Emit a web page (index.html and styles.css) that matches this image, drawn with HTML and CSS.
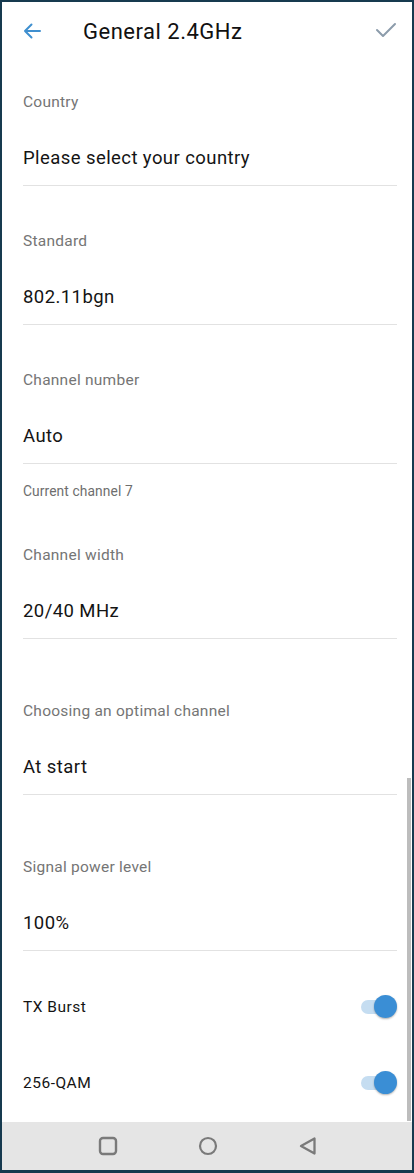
FILE: index.html
```html
<!DOCTYPE html>
<html>
<head>
<meta charset="utf-8">
<link rel="stylesheet" href="styles.css">
</head>
<body>
<div class="screen">
  <div class="header">
    <svg class="back" width="20" height="20" viewBox="0 0 20 20"><path d="M18 10H3M9.5 3.5L3 10l6.5 6.5" fill="none" stroke="#3f8fcf" stroke-width="2" stroke-linecap="round" stroke-linejoin="round"/></svg>
    <div class="title">General 2.4GHz</div>
    <svg class="check" width="22" height="16" viewBox="0 0 22 16"><path d="M2 8l6 6L20 2" fill="none" stroke="#8c9cab" stroke-width="2" stroke-linecap="round" stroke-linejoin="round"/></svg>
  </div>
  <div class="content">
    <div class="field first">
      <div class="label">Country</div>
      <div class="value">Please select your country</div>
      <div class="divider"></div>
    </div>
    <div class="field">
      <div class="label">Standard</div>
      <div class="value">802.11bgn</div>
      <div class="divider"></div>
    </div>
    <div class="field">
      <div class="label">Channel number</div>
      <div class="value">Auto</div>
      <div class="divider"></div>
      <div class="helper">Current channel 7</div>
    </div>
    <div class="field">
      <div class="label">Channel width</div>
      <div class="value">20/40 MHz</div>
      <div class="divider"></div>
    </div>
    <div class="field wide">
      <div class="label">Choosing an optimal channel</div>
      <div class="value">At start</div>
      <div class="divider"></div>
    </div>
    <div class="field wide">
      <div class="label">Signal power level</div>
      <div class="value">100%</div>
      <div class="divider"></div>
    </div>
    <div class="row first-row">
      <span class="row-label">TX Burst</span>
      <span class="toggle"><span class="track"></span><span class="knob"></span></span>
    </div>
    <div class="row">
      <span class="row-label">256-QAM</span>
      <span class="toggle"><span class="track"></span><span class="knob"></span></span>
    </div>
  </div>
  <div class="scrollbar"></div>
  <div class="navbar">
    <svg width="20" height="20" viewBox="0 0 20 20"><rect x="2" y="2" width="16" height="16" rx="3" fill="none" stroke="#7a7a7a" stroke-width="2.4"/></svg>
    <svg width="20" height="20" viewBox="0 0 20 20"><circle cx="10" cy="10" r="8" fill="none" stroke="#7a7a7a" stroke-width="2.2"/></svg>
    <svg width="20" height="20" viewBox="0 0 20 20"><path d="M16.5 2.5v15L3 10z" fill="none" stroke="#7a7a7a" stroke-width="2.3" stroke-linejoin="round"/></svg>
  </div>
</div>
</body>
</html>
```

FILE: styles.css
```css
html, body {
  margin: 0;
  padding: 0;
}
body {
  background: #163a4f;
  font-family: Roboto, "Noto Sans", Arial, sans-serif;
  height: 1173px;
  overflow: hidden;
}
.screen {
  margin: 2px 2px 3px 2px;
  height: 1168px;
  background: #ffffff;
  display: flex;
  flex-direction: column;
  position: relative;
}
.header {
  height: 58px;
  display: flex;
  align-items: center;
  padding: 0 15px 0 20px;
  flex-shrink: 0;
}
.back {
  flex-shrink: 0;
}
.title {
  margin-left: 41px;
  font-size: 22px;
  letter-spacing: 0.5px;
  color: #111111;
  flex: 1;
}
.check {
  margin-top: -2px;
}
.content {
  flex: 1;
  padding: 0 15px 0 21px;
}
.field {
  padding-top: 45px;
}
.field.first {
  padding-top: 32px;
}
.field.wide {
  padding-top: 62px;
}
.label {
  font-size: 15.5px;
  letter-spacing: 0.25px;
  line-height: 20px;
  height: 20px;
  color: #757575;
}
.value {
  margin-top: 34px;
  font-size: 18.5px;
  letter-spacing: 0.42px;
  line-height: 24px;
  height: 24px;
  color: #141414;
}
.divider {
  margin-top: 15px;
  height: 1px;
  background: #e2e2e2;
}
.helper {
  margin-top: 18px;
  font-size: 13.8px;
  letter-spacing: 0.1px;
  line-height: 18px;
  height: 18px;
  color: #6e6e6e;
}
.row {
  height: 48px;
  display: flex;
  align-items: center;
  justify-content: space-between;
  margin-top: 28px;
}
.row.first-row {
  margin-top: 32px;
}
.row-label {
  font-size: 15.5px;
  letter-spacing: 0.5px;
  color: #141414;
}
.toggle {
  position: relative;
  width: 38px;
  height: 24px;
  display: block;
}
.track {
  position: absolute;
  left: 2px;
  top: 5px;
  width: 30px;
  height: 14px;
  border-radius: 7px;
  background: #c5ddf1;
}
.knob {
  position: absolute;
  right: 0;
  top: 0;
  width: 23px;
  height: 23px;
  border-radius: 50%;
  background: #3a8ed5;
  box-shadow: 0 1px 2px rgba(0, 0, 0, 0.3);
}
.scrollbar {
  position: absolute;
  right: 1px;
  top: 776px;
  width: 4px;
  height: 343px;
  background: #bdbdbd;
}
.navbar {
  height: 48px;
  background: #e5e5e5;
  display: flex;
  align-items: center;
  justify-content: center;
  gap: 80px;
  padding-left: 2px;
  flex-shrink: 0;
}
```
